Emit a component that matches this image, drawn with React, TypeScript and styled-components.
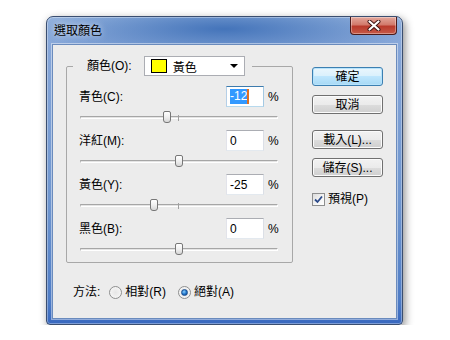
import styled, { createGlobalStyle } from "styled-components"

const GlobalStyle = createGlobalStyle`
  html, body {
    margin: 0;
    background: #fff;
  }
  body {
    font-family: "Liberation Sans", "Noto Sans CJK TC", sans-serif;
    font-size: 12px;
    color: #000;
  }
`

const Window = styled.div`
  margin: 16px 0 0 46px;
  width: 357px;
  height: 309px;
  box-sizing: border-box;
  display: flex;
  flex-direction: column;
  padding: 0 5px 5px;
  border: 1px solid #3a4e70;
  border-radius: 7px 7px 4px 4px;
  background:
    radial-gradient(ellipse 55% 30px at 50% 12px, #4474ba 0%, rgba(68, 116, 186, 0) 100%),
    linear-gradient(to bottom, #97b5df 0%, #86a6d8 10%, #6f96cf 60%, #4f7dc6 92%, #3868bf 100%);
  box-shadow: 2px 3px 9px rgba(0, 0, 0, 0.45), inset 0 0 0 1px rgba(255, 255, 255, 0.35);
`

const TitleBar = styled.div`
  height: 27px;
  display: flex;
  justify-content: space-between;
  align-items: flex-start;
`

const Title = styled.div`
  padding: 6px 0 0 2px;
  line-height: 16px;
  color: #000;
  text-shadow: 0 0 6px rgba(255, 255, 255, 0.9);
`

const CloseButton = styled.div`
  width: 47px;
  height: 18px;
  box-sizing: border-box;
  border: 1px solid #4a1a1a;
  border-top: none;
  border-radius: 0 0 4px 4px;
  background: linear-gradient(to bottom, #e3a89c 0%, #d27a6c 45%, #b93a2c 55%, #c65a48 100%);
  box-shadow: inset 0 0 0 1px rgba(255, 255, 255, 0.35);
  display: flex;
  align-items: center;
  justify-content: center;
`

const Client = styled.div`
  flex: 1;
  background: #ececec;
  border: 1px solid #6a8bbd;
  box-shadow: 0 0 0 1px rgba(255, 255, 255, 0.45);
  display: flex;
  padding: 11px 13px 0;
`

const LeftCol = styled.div`
  width: 227px;
  display: flex;
  flex-direction: column;
`

const Group = styled.fieldset`
  margin: 0;
  padding: 0;
  min-width: 0;
  width: 227px;
  box-sizing: border-box;
  border: 1px solid #a8a8a8;
  border-radius: 2px;
`

const Legend = styled.legend`
  margin-left: 6px;
  padding: 0 7px 0 14px;
`

const LegendInner = styled.div`
  display: flex;
  align-items: center;
  gap: 12px;
  height: 20px;
`

const Select = styled.div`
  width: 101px;
  height: 20px;
  box-sizing: border-box;
  border: 1px solid #abadb3;
  background: #fff;
  display: flex;
  align-items: center;
  padding: 0 6px;
  gap: 6px;
`

const Swatch = styled.span<{ $color: string }>`
  width: 16px;
  height: 14px;
  box-sizing: border-box;
  border: 1px solid #000;
  background: ${p => p.$color};
`

const Arrow = styled.span`
  margin-left: auto;
  width: 0;
  height: 0;
  border-left: 4px solid transparent;
  border-right: 4px solid transparent;
  border-top: 4px solid #000;
`

const Rows = styled.div`
  padding: 10px 14px 0 12px;
`

const Row = styled.div`
  display: grid;
  grid-template-columns: 1fr 38px 14px;
  align-items: center;
`

const Label = styled.span`
  line-height: 16px;
`

const Input = styled.div<{ $focused?: boolean }>`
  height: 21px;
  box-sizing: border-box;
  border: 1px solid;
  border-color: ${p => p.$focused ? "#3d7bad #a4c9e3 #b7d9ed #b5cfe7" : "#abadb3 #dbdfe6 #e3e9ef #e2e3ea"};
  background: #fff;
  display: flex;
  align-items: center;
  padding-left: 3px;
`

const Selected = styled.span`
  background: #3399ff;
  color: #fff;
  line-height: 15px;
`

const Caret = styled.span`
  width: 2px;
  height: 15px;
  background: #e07020;
`

const Percent = styled.span`
  padding-left: 4px;
`

const Slider = styled.div`
  grid-column: 1 / -1;
  position: relative;
  height: 23px;
  margin-left: 1px;
`

const Track = styled.div`
  position: absolute;
  left: 0;
  right: 0;
  top: 9px;
  height: 3px;
  box-sizing: border-box;
  border-top: 1px solid #a6a6a6;
  border-bottom: 1px solid #fff;
  border-left: 1px solid #b8b8b8;
  border-right: 1px solid #fff;
  background: #e4e4e4;
`

const Tick = styled.div`
  position: absolute;
  left: calc(50% - 1px);
  top: 8px;
  width: 1px;
  height: 6px;
  background: #a0a0a0;
`

const Thumb = styled.div`
  position: absolute;
  top: 4px;
  width: 8px;
  height: 12px;
  box-sizing: border-box;
  border: 1px solid #777;
  border-radius: 2px 2px 3px 3px;
  background: linear-gradient(to bottom, #ffffff 0%, #f0f0f0 50%, #d6d6d6 100%);
`

const MethodRow = styled.div`
  margin-top: 21px;
  padding-left: 7px;
  display: flex;
  align-items: center;
  line-height: 16px;
`

const Option = styled.span`
  display: flex;
  align-items: center;
  gap: 3px;
  margin-left: 9px;
  & + & {
    margin-left: 12px;
  }
`

const Radio = styled.span<{ $checked?: boolean }>`
  width: 13px;
  height: 13px;
  box-sizing: border-box;
  border-radius: 50%;
  border: 1px solid #8e8f8f;
  background: radial-gradient(circle at 50% 50%, #e6e6e6 0%, #f4f4f4 70%, #fff 100%);
  display: flex;
  align-items: center;
  justify-content: center;
  &::after {
    content: "";
    display: ${p => p.$checked ? "block" : "none"};
    width: 5px;
    height: 5px;
    border-radius: 50%;
    background: radial-gradient(circle at 40% 35%, #8ad0ff 0%, #1e72c8 55%, #0c3f86 100%);
    border: 1px solid #1c4f8f;
  }
`

const RightCol = styled.div`
  margin-left: 19px;
  padding-top: 11px;
  width: 71px;
  display: flex;
  flex-direction: column;
`

const Button = styled.div<{ $default?: boolean; $gap: number }>`
  margin-top: ${p => p.$gap}px;
  height: 19px;
  box-sizing: border-box;
  border: 1px solid ${p => p.$default ? "#3c7fb1" : "#707070"};
  border-radius: 3px;
  background: ${p => p.$default
    ? "linear-gradient(to bottom, #eaf6fd 0%, #d9f0fc 50%, #bee6fd 50%, #a7d9f5 100%)"
    : "linear-gradient(to bottom, #f2f2f2 0%, #ebebeb 50%, #dddddd 50%, #cfcfcf 100%)"};
  box-shadow: inset 0 0 0 1px ${p => p.$default ? "#b7e3fb" : "#fbfbfb"};
  display: flex;
  align-items: center;
  justify-content: center;
  line-height: 16px;
`

const CheckRow = styled.div`
  margin-top: 14px;
  display: flex;
  align-items: center;
  gap: 3px;
  line-height: 16px;
`

const Check = styled.span`
  width: 13px;
  height: 13px;
  box-sizing: border-box;
  border: 1px solid #8e8f8f;
  background: linear-gradient(135deg, #dcdcdc 0%, #f6f6f6 60%, #fff 100%);
  display: flex;
  align-items: center;
  justify-content: center;
`

const channels = [
  { label: "青色(C):", value: -12, focused: true },
  { label: "洋紅(M):", value: 0 },
  { label: "黃色(Y):", value: -25 },
  { label: "黑色(B):", value: 0 },
]

export default function App() {
  return <>
    <GlobalStyle />
    <Window>
      <TitleBar>
        <Title>選取顏色</Title>
        <CloseButton>
          <svg width="14" height="11" viewBox="0 0 14 11">
            <path d="M2.5 1.5 L11.5 9.5 M11.5 1.5 L2.5 9.5" stroke="#3a1010" strokeWidth="4" strokeLinecap="round" />
            <path d="M2.5 1.5 L11.5 9.5 M11.5 1.5 L2.5 9.5" stroke="#fff" strokeWidth="2.2" strokeLinecap="round" />
          </svg>
        </CloseButton>
      </TitleBar>
      <Client>
        <LeftCol>
          <Group>
            <Legend>
              <LegendInner>
                <Label>顏色(O):</Label>
                <Select>
                  <Swatch $color="#ffff00" />
                  黃色
                  <Arrow />
                </Select>
              </LegendInner>
            </Legend>
            <Rows>
              {channels.map(c =>
                <Row key={c.label}>
                  <Label>{c.label}</Label>
                  <Input $focused={c.focused}>
                    {c.focused ? <><Selected>{c.value}</Selected><Caret /></> : c.value}
                  </Input>
                  <Percent>%</Percent>
                  <Slider>
                    <Track />
                    <Tick />
                    <Thumb style={{ left: `calc(${50 + c.value / 2}% - 4px)` }} />
                  </Slider>
                </Row>
              )}
            </Rows>
          </Group>
          <MethodRow>
            方法:
            <Option><Radio />相對(R)</Option>
            <Option><Radio $checked />絕對(A)</Option>
          </MethodRow>
        </LeftCol>
        <RightCol>
          <Button $default $gap={0}>確定</Button>
          <Button $gap={9}>取消</Button>
          <Button $gap={16}>載入(L)...</Button>
          <Button $gap={9}>儲存(S)...</Button>
          <CheckRow>
            <Check>
              <svg width="9" height="9" viewBox="0 0 9 9">
                <path d="M1 4.5 L3.5 7 L8 1.5" fill="none" stroke="#2b4a8a" strokeWidth="1.8" />
              </svg>
            </Check>
            預視(P)
          </CheckRow>
        </RightCol>
      </Client>
    </Window>
  </>
}
